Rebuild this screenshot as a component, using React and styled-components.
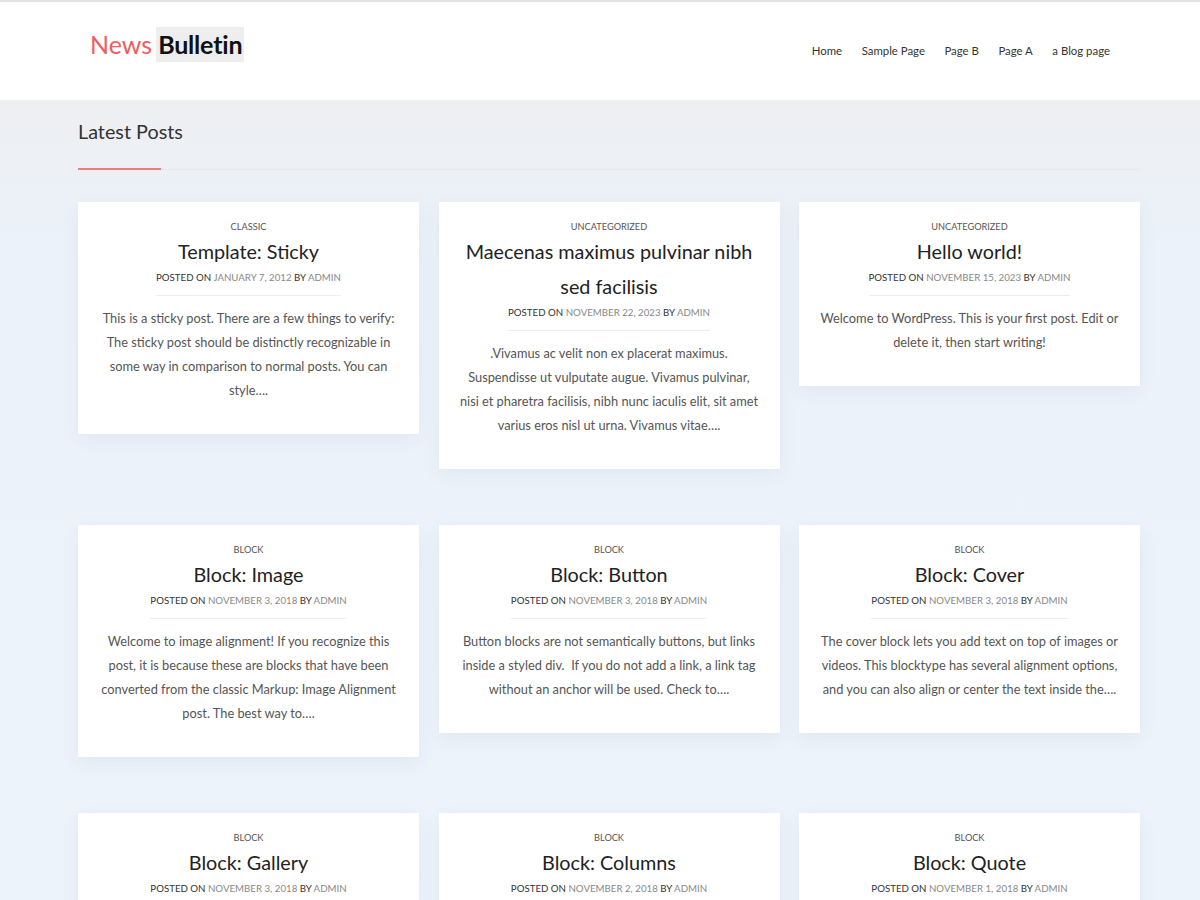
import styled, { createGlobalStyle } from 'styled-components';

const NAV_LINKS = ['Home', 'Sample Page', 'Page B', 'Page A', 'a Blog page'];

const POSTS = [
  {
    category: 'Classic',
    title: 'Template: Sticky',
    date: 'January 7, 2012',
    excerpt:
      'This is a sticky post. There are a few things to verify: The sticky post should be distinctly recognizable in some way in comparison to normal posts. You can style….',
  },
  {
    category: 'Uncategorized',
    title: 'Maecenas maximus pulvinar nibh sed facilisis',
    date: 'November 22, 2023',
    excerpt:
      '.Vivamus ac velit non ex placerat maximus. Suspendisse ut vulputate augue. Vivamus pulvinar, nisi et pharetra facilisis, nibh nunc iaculis elit, sit amet varius eros nisl ut urna. Vivamus vitae….',
  },
  {
    category: 'Uncategorized',
    title: 'Hello world!',
    date: 'November 15, 2023',
    excerpt: 'Welcome to WordPress. This is your first post. Edit or delete it, then start writing!',
  },
  {
    category: 'Block',
    title: 'Block: Image',
    date: 'November 3, 2018',
    excerpt:
      'Welcome to image alignment! If you recognize this post, it is because these are blocks that have been converted from the classic Markup: Image Alignment post. The best way to….',
  },
  {
    category: 'Block',
    title: 'Block: Button',
    date: 'November 3, 2018',
    excerpt:
      'Button blocks are not semantically buttons, but links inside a styled div.\u00a0 If you do not add a link, a link tag without an anchor will be used. Check to….',
  },
  {
    category: 'Block',
    title: 'Block: Cover',
    date: 'November 3, 2018',
    excerpt:
      'The cover block lets you add text on top of images or videos. This blocktype has several alignment options, and you can also align or center the text inside the….',
  },
  {
    category: 'Block',
    title: 'Block: Gallery',
    date: 'November 3, 2018',
    excerpt:
      'Gallery blocks have two settings: the number of columns, and whether or not images should be cropped. The default number of columns is three….',
  },
  {
    category: 'Block',
    title: 'Block: Columns',
    date: 'November 2, 2018',
    excerpt:
      'Phosfluorescently morph intuitive relationships rather than customer directed human capital. Dynamically customize turnkey….',
  },
  {
    category: 'Block',
    title: 'Block: Quote',
    date: 'November 1, 2018',
    excerpt:
      'Quotes are a great way to cite a source. You can also use them to call out a remarkable sentence from the text….',
  },
];

const GlobalStyle = createGlobalStyle`
  html, body {
    margin: 0;
    padding: 0;
  }

  body {
    font-family: Lato, 'Open Sans', sans-serif;
    background: linear-gradient(180deg, #eeeff1 100px, #ebf2fa 260px, #ecf3fb 100%);
    min-height: 100vh;
  }
`;

function App() {
  return (
    <>
      <GlobalStyle />
      <Header>
        <HeaderInner>
          <Logo>
            <LogoRed>News</LogoRed>
            <LogoDark>Bulletin</LogoDark>
          </Logo>
          <Nav>
            {NAV_LINKS.map((link) => (
              <NavLink key={link} href="#">
                {link}
              </NavLink>
            ))}
          </Nav>
        </HeaderInner>
      </Header>

      <Main>
        <SectionHead>
          <SectionTitle>Latest Posts</SectionTitle>
        </SectionHead>

        <PostGrid>
          {POSTS.map((post) => (
            <Card key={post.title}>
              <Category>{post.category}</Category>
              <Title>{post.title}</Title>
              <Meta>
                Posted on <MetaLink>{post.date}</MetaLink> by <MetaLink>admin</MetaLink>
              </Meta>
              <Excerpt>{post.excerpt}</Excerpt>
            </Card>
          ))}
        </PostGrid>
      </Main>
    </>
  );
}

export default App;

const Header = styled.header`
  height: 98px;
  border-top: 2px solid #e2e2e2;
  background-color: #fff;
`;

const HeaderInner = styled.div`
  width: 1020px;
  height: 100%;
  margin: 0 auto;

  display: flex;
  justify-content: space-between;
  align-items: flex-start;
`;

const Logo = styled.a`
  margin-top: 25px;

  display: flex;
  align-items: center;
  gap: 4px;

  font-size: 25px;
  line-height: 35px;
  text-decoration: none;
`;

const LogoRed = styled.span`
  color: #f35b5b;
`;

const LogoDark = styled.span`
  padding: 0 2px;
  background-color: #eeeeee;
  color: #111;
  font-weight: 700;
  letter-spacing: -0.2px;
`;

const Nav = styled.nav`
  margin-top: 40px;

  display: flex;
  gap: 19.5px;
`;

const NavLink = styled.a`
  font-size: 11.4px;
  line-height: 18px;
  color: #333;
  text-decoration: none;
`;

const Main = styled.main`
  width: 1062px;
  margin: 0 0 0 78px;
  padding-bottom: 60px;
`;

const SectionHead = styled.div`
  position: relative;
  padding: 19px 0 26px;
  border-bottom: 1px solid #e9e7e7;

  &::after {
    content: '';
    position: absolute;
    left: 0;
    bottom: -1px;
    width: 83px;
    height: 2px;
    background-color: #ef7b7b;
  }
`;

const SectionTitle = styled.h2`
  margin: 0;
  font-size: 19.8px;
  line-height: 24px;
  font-weight: 400;
  color: #333;
`;

const PostGrid = styled.div`
  margin-top: 32px;

  display: grid;
  grid-template-columns: repeat(3, 1fr);
  column-gap: 19.5px;
  row-gap: 56px;
  align-items: start;
`;

const Card = styled.article`
  padding: 17px 20px 32px;
  background-color: #fff;
  box-shadow: 0 6px 18px rgba(60, 70, 90, 0.06);

  display: flex;
  flex-direction: column;
  align-items: center;
  text-align: center;
`;

const Category = styled.span`
  font-size: 9.2px;
  line-height: 16px;
  color: #555;
  text-transform: uppercase;
`;

const Title = styled.h3`
  margin: -1px 0 0;
  font-size: 19.8px;
  line-height: 35px;
  font-weight: 400;
  color: #222;
`;

const Meta = styled.div`
  padding-bottom: 10px;
  border-bottom: 1px solid #eeeeee;

  font-size: 9.7px;
  line-height: 16px;
  color: #333;
  text-transform: uppercase;
`;

const MetaLink = styled.span`
  color: #888;
`;

const Excerpt = styled.p`
  margin: 10px 0 0;
  font-size: 12.8px;
  line-height: 24px;
  color: #555;
`;
